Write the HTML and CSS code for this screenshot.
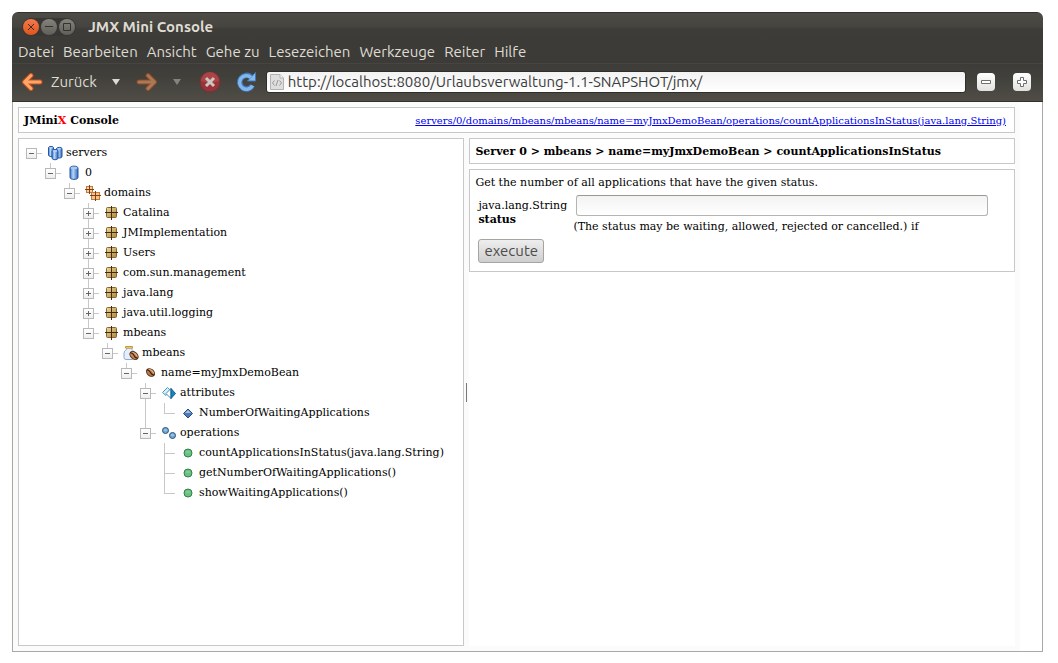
FILE: index.html
```html
<!DOCTYPE html>
<html lang="de">
<head>
    <meta charset="UTF-8">
    <title>JMX Mini Console</title>
    <link rel="stylesheet" href="styles.css">
</head>
<body>
    <!-- Icons -->
    <svg class="sprite" aria-hidden="true">
        <defs>
            <linearGradient id="blue"><stop offset="0" stop-color="#3f78c8"/><stop offset=".4" stop-color="#b8d6f8"/><stop offset="1" stop-color="#2f66b8"/></linearGradient>
            <linearGradient id="gold" x1="0" y1="0" x2="1" y2="1"><stop offset="0" stop-color="#eadca0"/><stop offset="1" stop-color="#a8873c"/></linearGradient>
        </defs>
        <symbol id="cylinder" viewBox="0 0 16 16">
            <path d="M4 3C4 .5 12 .5 12 3V12.500C12 15 4 15 4 12.500Z" fill="url(#blue)" stroke="#2457a5"/>
            <ellipse cx="8" cy="3" rx="3.500" ry="1.300" fill="#a9c8f0"/>
        </symbol>
        <symbol id="servers" viewBox="0 0 16 16">
            <g fill="url(#blue)" stroke="#2457a5">
                <path d="M1.500 2.500C1.500 1 6.500 1 6.500 2.500V10C6.500 12 1.500 12 1.500 10Z"/>
                <path d="M9.500 3.500C9.500 2 15 2 15 3.500V11.500C15 13.500 9.500 13.500 9.500 11.500Z"/>
                <path d="M5 6C5 4 11 4 11 6V13C11 15.300 5 15.300 5 13Z"/>
            </g>
            <g fill="#b4d0f4"><ellipse cx="4" cy="2.700" rx="2" ry=".8"/><ellipse cx="12.300" cy="3.700" rx="2" ry=".8"/><ellipse cx="8" cy="6" rx="2.400" ry="1"/></g>
        </symbol>
        <symbol id="domains" viewBox="0 0 16 16">
            <rect x="1.500" y="1.500" width="6" height="6" fill="#f8cf9c" stroke="#c47a3c"/>
            <path d="M4.500 0V9M0 4.500H9" stroke="#7d4018"/>
            <rect x="6.500" y="7.500" width="8" height="7" fill="#f8c588" stroke="#c47a3c"/>
            <path d="M10.500 6V16M5 10.500H16" stroke="#7d4018"/>
        </symbol>
        <symbol id="domain" viewBox="0 0 16 16">
            <rect x="2.500" y="2.500" width="10" height="10" rx="1" fill="url(#gold)" stroke="#8a6430"/>
            <path d="M7.500 1V15M1 7.500H14" stroke="#4a250f"/>
        </symbol>
        <symbol id="bean" viewBox="0 0 16 16">
            <g transform="rotate(40 8.500 7.500)">
                <ellipse cx="8.500" cy="7.500" rx="4.500" ry="3.300" fill="#b57a4c" stroke="#5c3015"/>
                <path d="M5 6Q8.500 4.500 11.500 6" stroke="#e3b78c" fill="none"/>
                <path d="M4 7.800Q6.500 6.500 8.500 7.500T13 7.200" stroke="#3b1b08" fill="none"/>
            </g>
        </symbol>
        <symbol id="jar" viewBox="0 0 16 16">
            <path d="M3.500 3V4.500Q1 6 1 8V12.500Q1 14.500 3 14.500H9.500Q11 14.500 11 12.500V8Q11 6 9 4.500V3Z" fill="#e6eefb" stroke="#8ea8d4"/>
            <path d="M2.500 1.500H9.500V3H2.500Z" fill="#fff3bd" stroke="#c79a2c"/>
            <g transform="rotate(42 11 10.500)">
                <ellipse cx="11" cy="10.500" rx="4.700" ry="3.300" fill="#c08857" stroke="#5c3015"/>
                <path d="M8 9Q11 7.500 14 9" stroke="#e3b78c" fill="none"/>
                <path d="M6.500 10.800Q9 9.200 11 10.500T15.500 10.200" stroke="#3b1b08" fill="none"/>
            </g>
        </symbol>
        <symbol id="attributes" viewBox="0 0 16 16">
            <path d="M1.500 7.500L6.500 2.500L9.500 5.500L5 10.500Z" fill="#d9f0fa" stroke="#4c9ac4"/>
            <path d="M5 8.500L10 3.500V13.500Z" fill="#fff" stroke="#3d8dba"/>
            <path d="M10 3.500L14.500 8.500L10 13.500Z" fill="#1984bb" stroke="#13618e"/>
        </symbol>
        <symbol id="attribute" viewBox="0 0 16 16">
            <path d="M8 4L12.500 8.500L8 13L3.500 8.500Z" fill="#4c79b8" stroke="#244b86"/>
            <path d="M8 5L11 8H5Z" fill="#a5c3e8"/>
        </symbol>
        <symbol id="operations" viewBox="0 0 16 16">
            <g fill="#73a8d3" stroke="#28527c"><circle cx="4.500" cy="5.500" r="3"/><circle cx="11.500" cy="10.500" r="3"/></g>
            <path d="M3 5H6M10 10H13" stroke="#b4d6ef"/>
        </symbol>
        <symbol id="operation" viewBox="0 0 16 16">
            <circle cx="8" cy="8" r="4" fill="#6cc083" stroke="#2c8149"/>
            <path d="M6 7H10" stroke="#92d3a3"/>
        </symbol>
        <symbol id="arrow" viewBox="0 0 22 18">
            <path d="M10 2.500L3.500 9L10 15.500M4 9H19" fill="none" stroke="#c9501f" stroke-width="5" stroke-linecap="round" stroke-linejoin="round"/>
            <path d="M10 2.500L3.500 9L10 15.500M4 9H19" fill="none" stroke="#fba769" stroke-width="3" stroke-linecap="round" stroke-linejoin="round"/>
        </symbol>
    </svg>

    <div class="window">
        <!-- Titelleiste -->
        <div class="titlebar">
            <div class="window-buttons">
                <button class="window-button close" aria-label="Schließen"><svg viewBox="0 0 16 16"><path d="M5 5L11 11M11 5L5 11"/></svg></button>
                <button class="window-button" aria-label="Minimieren"><svg viewBox="0 0 16 16"><path d="M4 7.500H12"/></svg></button>
                <button class="window-button" aria-label="Maximieren"><svg viewBox="0 0 16 16"><path d="M4.500 4.500H11.500V11.500H4.500Z"/></svg></button>
            </div>
            <span class="window-title">JMX Mini Console</span>
        </div>

        <!-- Menü -->
        <nav class="menubar">
            <button>Datei</button>
            <button>Bearbeiten</button>
            <button>Ansicht</button>
            <button>Gehe zu</button>
            <button>Lesezeichen</button>
            <button>Werkzeuge</button>
            <button>Reiter</button>
            <button>Hilfe</button>
        </nav>

        <!-- Werkzeugleiste -->
        <div class="toolbar">
            <button class="tool back"><svg class="arrow"><use href="#arrow"/></svg>Zurück</button>
            <button class="tool drop" aria-label="Verlauf zurück"><svg viewBox="0 0 8 6"><path d="M0 0H8L4 6Z"/></svg></button>
            <button class="tool forward" aria-label="Vor"><svg class="arrow"><use href="#arrow"/></svg></button>
            <button class="tool drop disabled" aria-label="Verlauf vor"><svg viewBox="0 0 8 6"><path d="M0 0H8L4 6Z"/></svg></button>
            <button class="tool stop" aria-label="Stopp">
                <svg viewBox="0 0 22 22"><circle cx="11" cy="11" r="10" fill="#97343a" stroke="#7d3034"/><path d="M2 10A9 9 0 0 1 20 10Q11 13 2 10Z" fill="#a94547"/><path d="M7 7L15 15M15 7L7 15" stroke="#cfc5c0" stroke-width="3"/></svg>
            </button>
            <button class="tool reload" aria-label="Neu laden">
                <svg viewBox="0 0 20 22"><path d="M15.500 14.500A6.800 6.800 0 1 1 14 6" fill="none" stroke="#3f79ba" stroke-width="5.500"/><path d="M18.500 1.500V10H10.500Z" fill="#86b9ee" stroke="#3f79ba"/><path d="M15.500 14.500A6.800 6.800 0 1 1 14 6.500" fill="none" stroke="#82b6ec" stroke-width="3.500"/></svg>
            </button>
            <div class="address">
                <svg viewBox="0 0 14 16"><path d="M.5 .5H10L13.500 4V15.500H.5Z" fill="#dedede" stroke="#b3b3b3"/><path d="M10 .5V4H13.500" fill="#f5f5f5" stroke="#b3b3b3"/><path d="M4.500 6.500L2.500 9L4.500 11.500M9.500 6.500L11.500 9L9.500 11.500M8 6L6 12" fill="none" stroke="#999"/></svg>
                <input type="text" aria-label="Adresse" value="http://localhost:8080/Urlaubsverwaltung-1.1-SNAPSHOT/jmx/">
            </div>
            <button class="zoom" aria-label="Verkleinern"><svg viewBox="0 0 12 12"><path d="M1.500 4.500H10.500V7.500H1.500Z"/></svg></button>
            <button class="zoom" aria-label="Vergrößern"><svg viewBox="0 0 12 12"><path d="M4.500 1.500H7.500V4.500H10.500V7.500H7.500V10.500H4.500V7.500H1.500V4.500H4.500Z"/></svg></button>
        </div>

        <!-- Seite -->
        <div class="viewport">
            <div class="page">
                <header class="box header">
                    <h1>JMini<span class="x">X</span> Console</h1>
                    <a href="#operation-form">servers/0/domains/mbeans/mbeans/name=myJmxDemoBean/operations/countApplicationsInStatus(java.lang.String)</a>
                </header>

                <div class="columns">
                    <div class="box tree-panel">
                        <ul class="tree">
                            <li>
                                <div class="row"><button class="toggle minus" aria-label="servers zuklappen"></button><svg><use href="#servers"/></svg><span>servers</span></div>
                                <ul>
                                    <li>
                                        <div class="row"><button class="toggle minus" aria-label="0 zuklappen"></button><svg><use href="#cylinder"/></svg><span>0</span></div>
                                        <ul>
                                            <li>
                                                <div class="row"><button class="toggle minus" aria-label="domains zuklappen"></button><svg><use href="#domains"/></svg><span>domains</span></div>
                                                <ul>
                                                    <li><div class="row"><button class="toggle plus" aria-label="Catalina aufklappen"></button><svg><use href="#domain"/></svg><span>Catalina</span></div></li>
                                                    <li><div class="row"><button class="toggle plus" aria-label="JMImplementation aufklappen"></button><svg><use href="#domain"/></svg><span>JMImplementation</span></div></li>
                                                    <li><div class="row"><button class="toggle plus" aria-label="Users aufklappen"></button><svg><use href="#domain"/></svg><span>Users</span></div></li>
                                                    <li><div class="row"><button class="toggle plus" aria-label="com.sun.management aufklappen"></button><svg><use href="#domain"/></svg><span>com.sun.management</span></div></li>
                                                    <li><div class="row"><button class="toggle plus" aria-label="java.lang aufklappen"></button><svg><use href="#domain"/></svg><span>java.lang</span></div></li>
                                                    <li><div class="row"><button class="toggle plus" aria-label="java.util.logging aufklappen"></button><svg><use href="#domain"/></svg><span>java.util.logging</span></div></li>
                                                    <li>
                                                        <div class="row"><button class="toggle minus" aria-label="mbeans zuklappen"></button><svg><use href="#domain"/></svg><span>mbeans</span></div>
                                                        <ul>
                                                            <li>
                                                                <div class="row"><button class="toggle minus" aria-label="mbeans zuklappen"></button><svg><use href="#jar"/></svg><span>mbeans</span></div>
                                                                <ul>
                                                                    <li>
                                                                        <div class="row"><button class="toggle minus" aria-label="myJmxDemoBean zuklappen"></button><svg><use href="#bean"/></svg><span>name=myJmxDemoBean</span></div>
                                                                        <ul>
                                                                            <li>
                                                                                <div class="row"><button class="toggle minus" aria-label="attributes zuklappen"></button><svg><use href="#attributes"/></svg><span>attributes</span></div>
                                                                                <ul>
                                                                                    <li><div class="row leaf"><svg><use href="#attribute"/></svg><span>NumberOfWaitingApplications</span></div></li>
                                                                                </ul>
                                                                            </li>
                                                                            <li>
                                                                                <div class="row"><button class="toggle minus" aria-label="operations zuklappen"></button><svg><use href="#operations"/></svg><span>operations</span></div>
                                                                                <ul>
                                                                                    <li><div class="row leaf"><svg><use href="#operation"/></svg><span>countApplicationsInStatus(java.lang.String)</span></div></li>
                                                                                    <li><div class="row leaf"><svg><use href="#operation"/></svg><span>getNumberOfWaitingApplications()</span></div></li>
                                                                                    <li><div class="row leaf"><svg><use href="#operation"/></svg><span>showWaitingApplications()</span></div></li>
                                                                                </ul>
                                                                            </li>
                                                                        </ul>
                                                                    </li>
                                                                </ul>
                                                            </li>
                                                        </ul>
                                                    </li>
                                                </ul>
                                            </li>
                                        </ul>
                                    </li>
                                </ul>
                            </li>
                        </ul>
                    </div>

                    <div class="splitter"></div>

                    <main class="details">
                        <h2 class="box">Server 0 &gt; mbeans &gt; name=myJmxDemoBean &gt; countApplicationsInStatus</h2>
                        <form class="box operation" id="operation-form">
                            <p>Get the number of all applications that have the given status.</p>
                            <div class="param">
                                <label for="status">java.lang.String <b>status</b></label>
                                <div class="field">
                                    <input type="text" id="status">
                                    <span class="hint">(The status may be waiting, allowed, rejected or cancelled.) if</span>
                                </div>
                            </div>
                            <button type="button" class="execute">execute</button>
                        </form>
                    </main>
                </div>
            </div>
        </div>
    </div>
</body>
</html>
```
FILE: styles.css
```css
* {
    box-sizing: border-box;
}
body {
    margin: 0;
    height: 100vh;
    padding: 12px 15px 11px 12px;
    display: flex;
    background: white;
    font-family: "DejaVu Serif", serif;
    font-size: 11px;
    color: black;
}
button {
    border: none;
    padding: 0;
    background: none;
    color: inherit;
    font: inherit;
}
.sprite {
    position: absolute;
    width: 0;
    height: 0;
}
.window {
    flex: 1;
    min-width: 0;
    display: flex;
    flex-direction: column;
    border-radius: 6px 6px 0 0;
    overflow: hidden;
}

/* Titelleiste und Menü */
.titlebar,
.menubar,
.toolbar {
    display: flex;
    align-items: center;
    font-family: Ubuntu, "Noto Sans", sans-serif;
    font-size: 15px;
    color: #dfdbd2;
}
.titlebar {
    height: 28px;
    padding: 0 10px;
    gap: 12px;
    background: linear-gradient(#4c4b45, #45443f 50%, #3d3c38 60%, #3c3b37);
    border-top: 1px solid #33322e;
}
.window-buttons {
    display: flex;
    gap: 2px;
    padding: 1px;
    border-radius: 9px;
    background: #383733;
}
.window-button {
    width: 16px;
    height: 16px;
    border-radius: 50%;
    background: linear-gradient(#85837c, #5f5e58);
}
.window-button.close {
    background: linear-gradient(#f47a4c, #e4541a);
}
.window-button svg {
    display: block;
    fill: none;
    stroke: #33322e;
}
.window-title {
    font-weight: bold;
}
.menubar {
    height: 23px;
    padding-left: 6px;
    gap: 9px;
    background: #3c3b37;
}

/* Werkzeugleiste */
.toolbar {
    height: 39px;
    padding: 0 12px 2px 9px;
    background: linear-gradient(#3d3c38, #403f3a 30%, #504d46);
    border-top: 1px solid #464540;
    border-bottom: 1px solid #34322e;
}
.tool {
    display: flex;
    align-items: center;
}
.arrow {
    width: 22px;
    height: 18px;
}
.back {
    gap: 8px;
}
.forward {
    margin-left: 16px;
    opacity: 0.55;
}
.forward .arrow {
    transform: scaleX(-1);
}
.drop {
    margin-left: 15px;
}
.drop svg {
    width: 8px;
    height: 6px;
    fill: #dfdbd2;
}
.drop.disabled svg {
    fill: #85837c;
}
.stop {
    margin-left: 18px;
}
.stop svg {
    width: 22px;
    height: 22px;
}
.reload {
    margin: 0 9px 0 16px;
}
.reload svg {
    width: 20px;
    height: 22px;
}
.address {
    flex: 1;
    display: flex;
    align-items: center;
    gap: 4px;
    height: 22px;
    padding-left: 3px;
    border: 1px solid #2f2e2a;
    border-radius: 3px;
    background: linear-gradient(#f2f2f2, #fff);
}
.address svg {
    width: 14px;
    height: 16px;
}
.address input {
    flex: 1;
    min-width: 0;
    height: 20px;
    padding: 0;
    border: none;
    background: none;
    font: inherit;
    color: #3c3c3c;
}
.zoom {
    width: 18px;
    height: 18px;
    margin-left: 11px;
    display: flex;
    align-items: center;
    justify-content: center;
    border-radius: 4px;
    background: linear-gradient(#fff, #e2e1de);
}
.zoom + .zoom {
    margin-left: 18px;
}
.zoom svg {
    width: 12px;
    height: 12px;
    fill: #fff;
    stroke: #6f6f6b;
}

/* Seite */
.viewport {
    flex: 1;
    min-height: 0;
    display: flex;
    padding-right: 22px;
    border: 1px solid #a9a8a2;
    border-top: none;
    background: white;
}
.page {
    flex: 1;
    min-width: 0;
    display: flex;
    flex-direction: column;
    gap: 5px;
    padding: 5px;
    background: #fbfbfb;
}
.box {
    border: 1px solid #c8c8c8;
    background: white;
}
.header,
h2.box {
    height: 26px;
    padding: 0 8px 0 5px;
    margin: 0;
    display: flex;
    align-items: center;
    justify-content: space-between;
}
h1,
h2 {
    margin: 0;
    font-size: 11px;
}
.x {
    color: red;
}
.header a {
    font-size: 10px;
    color: #0000ee;
}
.columns {
    flex: 1;
    min-height: 0;
    display: grid;
    grid-template-columns: 45fr 5px 55fr;
}
.splitter {
    width: 1px;
    height: 19px;
    margin: auto;
    background: #777;
}

/* Baum */
.tree-panel {
    padding: 4px 7px;
    overflow: auto;
}
.tree,
.tree ul {
    margin: 0;
    padding: 0;
    list-style: none;
}
.tree ul {
    padding-left: 19px;
}
.tree ul > li {
    background: linear-gradient(#c8c8c8, #c8c8c8) 5px 0 / 1px 100% no-repeat;
}
.tree ul > li:last-child {
    background-size: 1px 10px;
}
.row {
    display: flex;
    align-items: center;
    height: 20px;
    background: linear-gradient(#c8c8c8, #c8c8c8) 5px 10px / 11px 1px no-repeat;
}
.row svg {
    width: 16px;
    height: 16px;
    margin: 0 3px 0 10px;
    flex: none;
}
.row.leaf svg {
    margin-left: 21px;
}
.row span {
    line-height: 18px;
    white-space: nowrap;
}
.toggle {
    width: 11px;
    height: 11px;
    flex: none;
    border: 1px solid #b8b8b8;
    background: linear-gradient(#666, #666) 2px 4px / 5px 1px no-repeat, linear-gradient(#fff, #eee);
}
.toggle.plus {
    background: linear-gradient(#666, #666) 2px 4px / 5px 1px no-repeat, linear-gradient(#666, #666) 4px 2px / 1px 5px no-repeat, linear-gradient(#fff, #eee);
}

/* Operation */
.details {
    display: flex;
    flex-direction: column;
    gap: 5px;
    background: white;
}
.operation {
    padding: 6px 5px 8px;
}
.operation p {
    margin: 0;
    line-height: 14px;
}
.param {
    display: flex;
    gap: 3px;
    padding: 5px 3px;
}
.param label {
    width: 92px;
    padding-top: 4px;
    line-height: 14px;
}
.field {
    flex: 1;
}
.field input {
    display: block;
    width: calc(100% - 21px);
    height: 21px;
    margin-left: 3px;
    border: 1px solid #b5b4b0;
    border-top-color: #999891;
    border-radius: 3px;
    background: linear-gradient(#f3f3f3, #fff);
}
.hint {
    display: block;
    padding-top: 4px;
    line-height: 14px;
}
.execute {
    display: block;
    margin-left: 3px;
    padding: 0 5px;
    height: 24px;
    border: 1px solid #a5a49f;
    border-radius: 3px;
    background: linear-gradient(#eee, #cecece);
    font-family: Ubuntu, "Noto Sans", sans-serif;
    font-size: 15px;
    line-height: 20px;
    color: #4c4c4c;
}
```
